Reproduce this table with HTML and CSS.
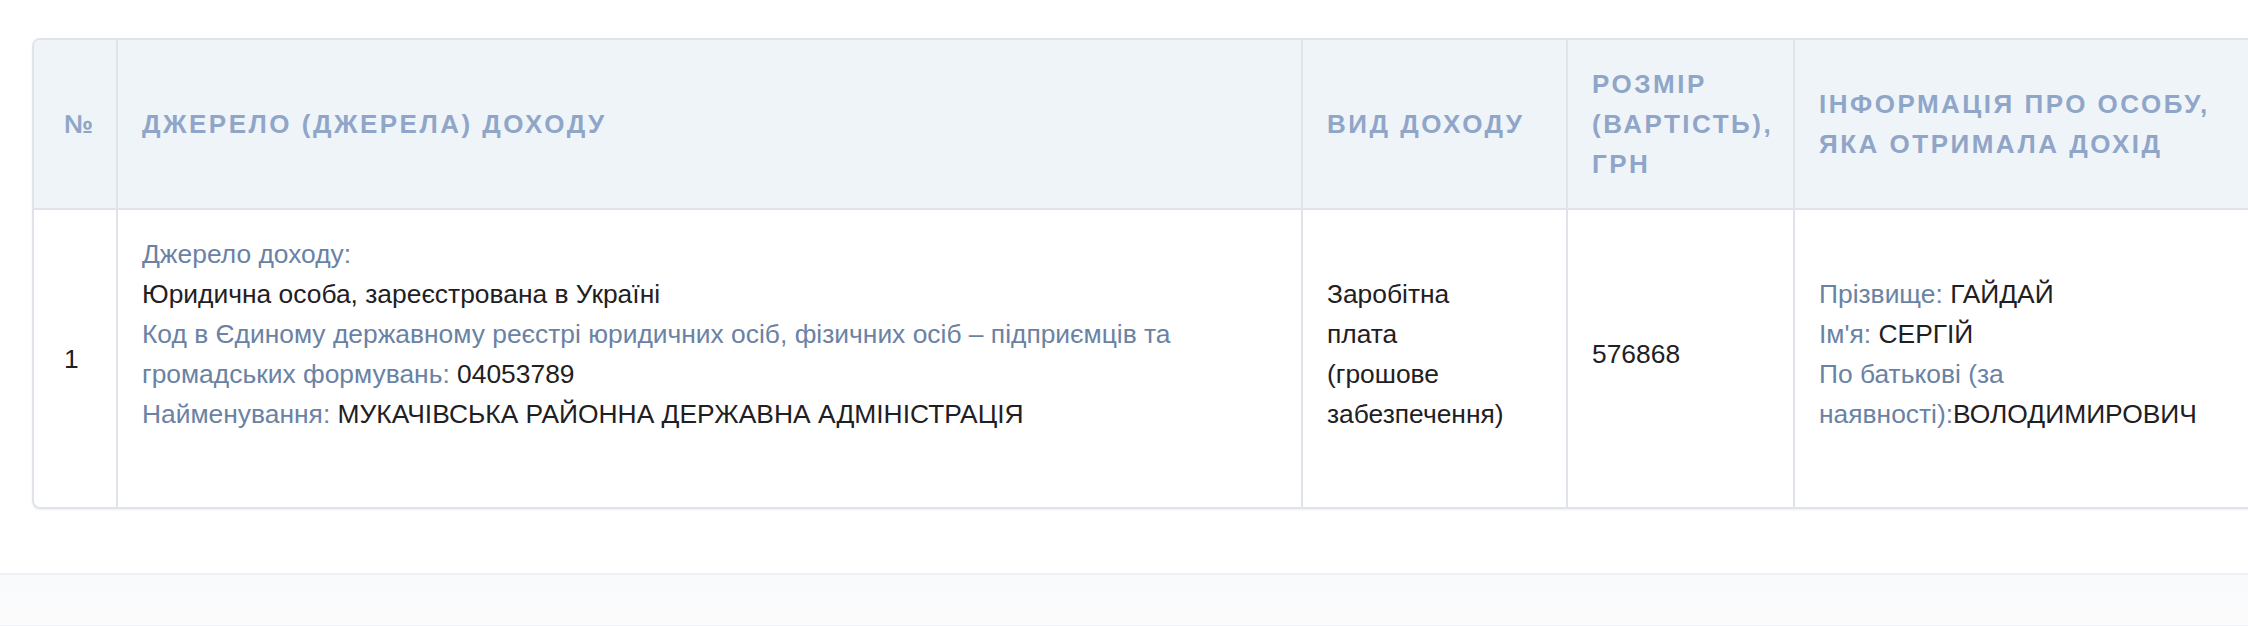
FILE: index.html
```html
<!DOCTYPE html>
<html lang="uk">
<head>
<meta charset="utf-8">
<title>Доходи</title>
<link rel="stylesheet" href="styles.css">
</head>
<body>
<main class="page">
  <div class="decl-table">
    <div class="cell head num first">№</div>
    <div class="cell head">ДЖЕРЕЛО (ДЖЕРЕЛА) ДОХОДУ</div>
    <div class="cell head">ВИД ДОХОДУ</div>
    <div class="cell head size">РОЗМІР (ВАРТІСТЬ), ГРН</div>
    <div class="cell head person">ІНФОРМАЦІЯ ПРО ОСОБУ, ЯКА ОТРИМАЛА ДОХІД</div>

    <div class="cell body num"><span>1</span></div>
    <div class="cell body source">
      <div class="lines">
        <div class="label">Джерело доходу:</div>
        <div>Юридична особа, зареєстрована в Україні</div>
        <div><span class="label">Код в Єдиному державному реєстрі юридичних осіб, фізичних осіб – підприємців та громадських формувань:</span> 04053789</div>
        <div><span class="label">Найменування:</span> МУКАЧІВСЬКА РАЙОННА ДЕРЖАВНА АДМІНІСТРАЦІЯ</div>
      </div>
    </div>
    <div class="cell body kind"><div class="lines">Заробітна плата (грошове забезпечення)</div></div>
    <div class="cell body size"><div class="lines">576868</div></div>
    <div class="cell body person">
      <div class="lines">
        <div><span class="label">Прізвище:</span> ГАЙДАЙ</div>
        <div><span class="label">Ім'я:</span> СЕРГІЙ</div>
        <div><span class="label">По батькові (за наявності):</span>ВОЛОДИМИРОВИЧ</div>
      </div>
    </div>
  </div>
</main>
<footer class="band"></footer>
</body>
</html>
```

FILE: styles.css
```css
html, body {
  margin: 0;
  padding: 0;
  background: #ffffff;
}

body {
  font-family: "Liberation Sans", Arial, Helvetica, sans-serif;
  color: #1f2023;
  font-size: 26.4px;
  line-height: 40px;
}

.page {
  padding: 38px 0 4px 32px;
  overflow: hidden;
}

.decl-table {
  display: grid;
  grid-template-columns: 84px 1185px 265px 227px 470px;
  width: max-content;
  border: 2px solid #e0e4ea;
  border-radius: 8px 0 0 8px;
  box-shadow: 0 1px 2px rgba(40, 60, 90, 0.08);
  background: #ffffff;
}

.cell {
  display: flex;
  align-items: center;
  border-right: 2px solid #e0e4ea;
  padding: 0 24px;
}

.head {
  background: #eff4f9;
  border-bottom: 2px solid #e0e4ea;
  color: #90a6c8;
  font-weight: bold;
  font-size: 26px;
  letter-spacing: 2.5px;
  padding-top: 24px;
  padding-bottom: 24px;
  min-height: 120px;
}

.head.first {
  border-top-left-radius: 6px;
}

.num {
  padding-left: 30px;
  padding-right: 8px;
}

.head.size {
  padding-right: 18px;
}

.body {
  padding-top: 24px;
  padding-bottom: 24px;
}

.body.source {
  align-items: flex-start;
  padding-bottom: 73px;
}

.body.kind {
  padding-right: 56px;
}

.body.kind .lines,
.body.size .lines,
.body.person .lines {
  margin-bottom: 10px;
}

.label {
  color: #6a82a4;
}

.band {
  margin-top: 60px;
  height: 50px;
  border-top: 2px solid #edf0f5;
  border-bottom: 1px solid #eef0f5;
  background: linear-gradient(#f8f9fa, #fcfcfd);
}
```
